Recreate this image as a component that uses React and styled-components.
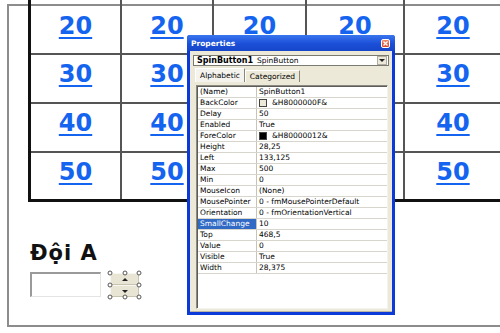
import React from "react"
import styled, { createGlobalStyle } from "styled-components"

const GlobalStyle = createGlobalStyle`
  html, body {
    margin: 0;
    padding: 0;
    background: #fff;
  }
  #root {
    width: 500px;
    height: 333px;
    overflow: hidden;
  }
`

const Page = styled.div`
  position: relative;
  width: 500px;
  height: 333px;
  overflow: hidden;
  background: #fff;
  font-family: "DejaVu Sans", sans-serif;
`

// slide frame, runs off the right edge
const Frame = styled.div`
  box-sizing: border-box;
  margin: 4px 0 0 7px;
  width: 540px;
  height: 323px;
  border: 2px solid #8c8c8c;
  border-right: none;
`

const Board = styled.div`
  display: grid;
  grid-template-columns: 91px 92px 93px 98px 98px;
  grid-template-rows: 53px 49px 49px 48px;
  width: max-content;
  margin: -6px 0 0 19px;
  border-left: 3px solid #111;
  border-bottom: 3px solid #111;
`

const Cell = styled.div`
  box-sizing: border-box;
  display: flex;
  justify-content: center;
  align-items: flex-start;
  padding-top: ${props => (props.$first ? "14px" : "7px")};
  border-right: 2px solid #555;
  border-top: ${props => (props.$first ? "none" : "2px solid #555")};
`

const Score = styled.a`
  font: bold 24px/1 "DejaVu Sans", sans-serif;
  color: #1464f0;
  text-decoration: underline;
  text-decoration-thickness: 2px;
  text-underline-offset: 3px;
  cursor: pointer;
`

const TeamLabel = styled.div`
  margin: 41px 0 0 21px;
  font: bold 21px/1 "DejaVu Sans", sans-serif;
  letter-spacing: 1px;
  color: #111;
`

const ControlRow = styled.div`
  display: flex;
  align-items: flex-start;
  gap: 9px;
  margin: 8px 0 0 21px;
`

const TextBox = styled.div`
  box-sizing: border-box;
  width: 71px;
  height: 25px;
  background: #fff;
  border-style: solid;
  border-width: 2px 1px 1px 2px;
  border-color: #9a9a9a #e4e4e4 #e4e4e4 #9a9a9a;
`

const Spin = styled.div`
  position: relative;
  display: flex;
  flex-direction: column;
  width: 29px;
  height: 24px;
  margin-top: 1px;
`

const SpinHalf = styled.div`
  flex: 1;
  display: flex;
  align-items: center;
  justify-content: center;
  background: #e8e5d5;
  border: 1px solid;
  border-color: #f7f6f0 #c8c4b0 #c8c4b0 #f7f6f0;
`

const Arrow = styled.span`
  width: 0;
  height: 0;
  border-left: 3px solid transparent;
  border-right: 3px solid transparent;
  ${props =>
    props.$down ? "border-top: 3px solid #222;" : "border-bottom: 3px solid #222;"}
`

const Handle = styled.span`
  position: absolute;
  left: ${props => props.$x}%;
  top: ${props => props.$y}%;
  width: 3px;
  height: 3px;
  border-radius: 50%;
  border: 1px solid #555;
  background: #fff;
  transform: translate(-50%, -50%);
`

/* properties window */

const PropWindow = styled.div`
  position: absolute;
  left: 187px;
  top: 35px;
  width: 208px;
  height: 280px;
  box-sizing: border-box;
  display: flex;
  flex-direction: column;
  background: #ece9d8;
  border: 3px solid #0b3ad8;
  border-top: none;
  border-radius: 3px 3px 0 0;
  box-shadow: inset 0 -1px 0 #b9b6a6;
`

const TitleBar = styled.div`
  display: flex;
  align-items: center;
  justify-content: space-between;
  height: 16px;
  margin: 0 -3px;
  padding: 0 5px 0 4px;
  border-radius: 3px 3px 0 0;
  background: linear-gradient(#3a76ee, #1b4fd8 55%, #1645c8);
  color: #fff;
  font: bold 7.5px "DejaVu Sans", sans-serif;
`

const CloseBtn = styled.div`
  box-sizing: border-box;
  display: flex;
  align-items: center;
  justify-content: center;
  width: 9px;
  height: 9px;
  border: 1px solid #fff;
  border-radius: 2px;
  background: linear-gradient(#f08a6a, #d8452a);
`

const WinBody = styled.div`
  flex: 1;
  display: flex;
  flex-direction: column;
  padding: 4px 3px 3px 3px;
  min-height: 0;
`

const Combo = styled.div`
  box-sizing: border-box;
  display: flex;
  align-items: center;
  height: 11px;
  padding-left: 3px;
  background: #fff;
  border: 1px solid #7a7a72;
  font-size: 7.5px;
  color: #000;
`

const ComboName = styled.span`
  font-weight: bold;
  font-size: 8px;
  width: 60px;
`

const ComboDrop = styled.div`
  margin-left: auto;
  margin-right: 1px;
  display: flex;
  align-items: center;
  justify-content: center;
  width: 8px;
  height: 7px;
  background: #ece9d8;
  border: 1px solid #b0ada0;
`

const TabStrip = styled.div`
  display: flex;
  align-items: flex-end;
  height: 14px;
  margin: 2px 0 0 2px;
`

const Tab = styled.div`
  box-sizing: border-box;
  height: ${props => (props.$active ? "14px" : "12px")};
  padding: 0 4px;
  display: flex;
  align-items: center;
  font-size: 7.5px;
  color: #000;
  background: ${props => (props.$active ? "#f4f3ee" : "#ece9d8")};
  border: 1px solid;
  border-color: #fff #8a877a transparent #fff;
  border-bottom: none;
`

const GridPanel = styled.div`
  flex: 1;
  margin: 3px 1px 0 3px;
  background: #fff;
  border: 1px solid;
  border-color: #8b8a82 #f4f3ee #f4f3ee #8b8a82;
  box-shadow: inset 1px 1px 0 #5d5c56;
  padding: 1px 0 0 1px;
`

const PropRow = styled.div`
  box-sizing: border-box;
  display: grid;
  grid-template-columns: 59px 1fr;
  height: 11px;
  border-bottom: 1px solid #d8d5cc;
  font-size: 7.5px;
  line-height: 10px;
  color: #000;
`

const PropName = styled.div`
  padding-left: 2px;
  border-right: 1px solid #c6c3b8;
  white-space: nowrap;
  overflow: hidden;
  background: ${props => (props.$selected ? "#316ac5" : "transparent")};
  color: ${props => (props.$selected ? "#fff" : "#000")};
`

const PropValue = styled.div`
  display: flex;
  align-items: center;
  padding-left: 2px;
  white-space: nowrap;
`

const Swatch = styled.span`
  box-sizing: border-box;
  width: 8px;
  height: 8px;
  margin-right: 5px;
  border: 1px solid #444;
  background: ${props => props.$color};
`

const rows = [20, 30, 40, 50]

const props = [
  ["(Name)", "SpinButton1"],
  ["BackColor", "&H8000000F&", "#ece9d8"],
  ["Delay", "50"],
  ["Enabled", "True"],
  ["ForeColor", "&H80000012&", "#000"],
  ["Height", "28,25"],
  ["Left", "133,125"],
  ["Max", "500"],
  ["Min", "0"],
  ["MouseIcon", "(None)"],
  ["MousePointer", "0 - fmMousePointerDefault"],
  ["Orientation", "0 - fmOrientationVertical"],
  ["SmallChange", "10"],
  ["Top", "468,5"],
  ["Value", "0"],
  ["Visible", "True"],
  ["Width", "28,375"],
]

const handles = [
  [0, 0], [50, 0], [100, 0],
  [0, 50], [100, 50],
  [0, 100], [50, 100], [100, 100],
]

const App = () => {
  return (
    <Page>
      <GlobalStyle />
      <Frame>
        <Board>
          {rows.map((value, r) =>
            [0, 1, 2, 3, 4].map(c => (
              <Cell key={`${r}-${c}`} $first={r === 0}>
                <Score>{value}</Score>
              </Cell>
            ))
          )}
        </Board>

        <TeamLabel>Đội A</TeamLabel>
        <ControlRow>
          <TextBox />
          <Spin>
            <SpinHalf>
              <Arrow />
            </SpinHalf>
            <SpinHalf>
              <Arrow $down />
            </SpinHalf>
            {handles.map(([x, y]) => (
              <Handle key={`${x}-${y}`} $x={x} $y={y} />
            ))}
          </Spin>
        </ControlRow>
      </Frame>

      <PropWindow>
        <TitleBar>
          <span>Properties</span>
          <CloseBtn>
            <svg width="5" height="5" viewBox="0 0 5 5">
              <path d="M0.5 0.5 L4.5 4.5 M4.5 0.5 L0.5 4.5" stroke="#fff" strokeWidth="1.2" />
            </svg>
          </CloseBtn>
        </TitleBar>
        <WinBody>
          <Combo>
            <ComboName>SpinButton1</ComboName>
            <span>SpinButton</span>
            <ComboDrop>
              <Arrow $down />
            </ComboDrop>
          </Combo>
          <TabStrip>
            <Tab $active>Alphabetic</Tab>
            <Tab>Categorized</Tab>
          </TabStrip>
          <GridPanel>
            {props.map(([name, value, color]) => (
              <PropRow key={name}>
                <PropName $selected={name === "SmallChange"}>{name}</PropName>
                <PropValue>
                  {color && <Swatch $color={color} />}
                  {value}
                </PropValue>
              </PropRow>
            ))}
          </GridPanel>
        </WinBody>
      </PropWindow>
    </Page>
  )
}

export default App
